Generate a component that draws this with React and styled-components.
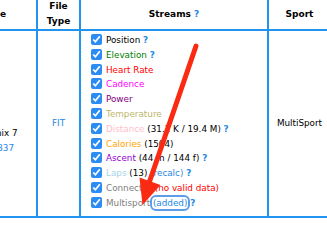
import React from "react";
import styled, { createGlobalStyle } from "styled-components";

const GlobalStyle = createGlobalStyle`
  html, body {
    margin: 0;
    padding: 0;
    background: #ffffff;
    overflow: hidden;
  }
  body {
    font-family: "DejaVu Sans", Verdana, sans-serif;
    color: #000000;
  }
`;

const streams = [
  { label: "Position", color: "#000000", help: true },
  { label: "Elevation", color: "#008000", help: true },
  { label: "Heart Rate", color: "#ff0000" },
  { label: "Cadence", color: "#ff00ff" },
  { label: "Power", color: "#800080" },
  { label: "Temperature", color: "#bdb76b" },
  { label: "Distance", color: "#ffc0cb", extra: " (31.2 K / 19.4 M)", help: true },
  { label: "Calories", color: "#ffa500", extra: " (1504)" },
  { label: "Ascent", color: "#9400d3", extra: " (44 m / 144 f)", help: true },
  { label: "Laps", color: "#a8d4e6", extra: " (13) ", link: "(recalc)", help: true },
  { label: "ConnectIQ", color: "#808080", warn: " (no valid data)" },
  { label: "Multisport", color: "#808080", extra: " ", link: "(added)", focused: true, help: true },
];

function App() {
  return (
    <Page>
      <GlobalStyle />
      <Table>
        <colgroup>
          <col style={{ width: 96 }} />
          <col style={{ width: 43 }} />
          <col style={{ width: 188 }} />
          <col style={{ width: 63 }} />
        </colgroup>
        <thead>
          <tr>
            <Th>Device</Th>
            <Th>File<br />Type</Th>
            <Th>
              Streams <Help>?</Help>
            </Th>
            <Th>Sport</Th>
          </tr>
        </thead>
        <tbody>
          <tr>
            <DeviceCell>
              Fenix 7
              <br />
              <Link>11337</Link>
            </DeviceCell>
            <Td $center>
              <Link>FIT</Link>
            </Td>
            <StreamsCell>
              {streams.map((s) => (
                <StreamRow key={s.label}>
                  <Check type="checkbox" defaultChecked />
                  <Label $color={s.color}>{s.label}</Label>
                  {s.extra}
                  {s.warn && <Warn>{s.warn}</Warn>}
                  {s.link && <Link $focused={s.focused}>{s.link}</Link>}
                  {s.help && (
                    <>
                      {" "}
                      <Help>?</Help>
                    </>
                  )}
                </StreamRow>
              ))}
            </StreamsCell>
            <Td $center>MultiSport</Td>
          </tr>
        </tbody>
      </Table>
      <Arrow width="327" height="225" viewBox="0 0 327 225">
        <line
          x1="196"
          y1="46"
          x2="148"
          y2="186"
          stroke="#fb2a12"
          strokeWidth="5"
          strokeLinecap="round"
        />
        <polygon points="142.5,205 139.5,177.5 160.5,185" fill="#fb2a12" />
      </Arrow>
    </Page>
  );
}

export default App;

const Page = styled.div`
  position: relative;
  width: 327px;
  height: 225px;
  overflow: hidden;
`;

const Table = styled.table`
  border-collapse: collapse;
  table-layout: fixed;
  width: 390px;
  margin: -4px 0 0 -60px;
  font-size: 8.8px;
`;

const Th = styled.th`
  border: 2px solid #2393f0;
  font-size: 9px;
  font-weight: bold;
  line-height: 15px;
  padding: 1px 2px 0 2px;
  text-align: center;
  vertical-align: middle;
`;

const Td = styled.td`
  border: 2px solid #2393f0;
  padding: 2px 4px;
  text-align: ${(p) => (p.$center ? "center" : "left")};
  vertical-align: middle;
  white-space: nowrap;
`;

const DeviceCell = styled(Td)`
  text-align: left;
  line-height: 15px;
  padding: 36px 0 0 44px;
`;

const StreamsCell = styled(Td)`
  padding: 2px 4px 5px 10px;
`;

const StreamRow = styled.div`
  height: 14.8px;
  line-height: 14.8px;
  white-space: pre;
`;

const Check = styled.input`
  width: 11px;
  height: 11px;
  margin: 0 4px 0 0;
  vertical-align: -2px;
  accent-color: #2b8cf3;
`;

const Label = styled.span`
  color: ${(p) => p.$color};
`;

const Warn = styled.span`
  color: #ff0000;
`;

const Link = styled.span`
  color: #1e88e5;
  border-radius: 3px;
  outline: ${(p) => (p.$focused ? "2px solid #5d9de8" : "none")};
  outline-offset: 1px;
`;

const Help = styled.span`
  color: #1e88e5;
  font-weight: bold;
`;

const Arrow = styled.svg`
  position: absolute;
  left: 0;
  top: 0;
  pointer-events: none;
`;
